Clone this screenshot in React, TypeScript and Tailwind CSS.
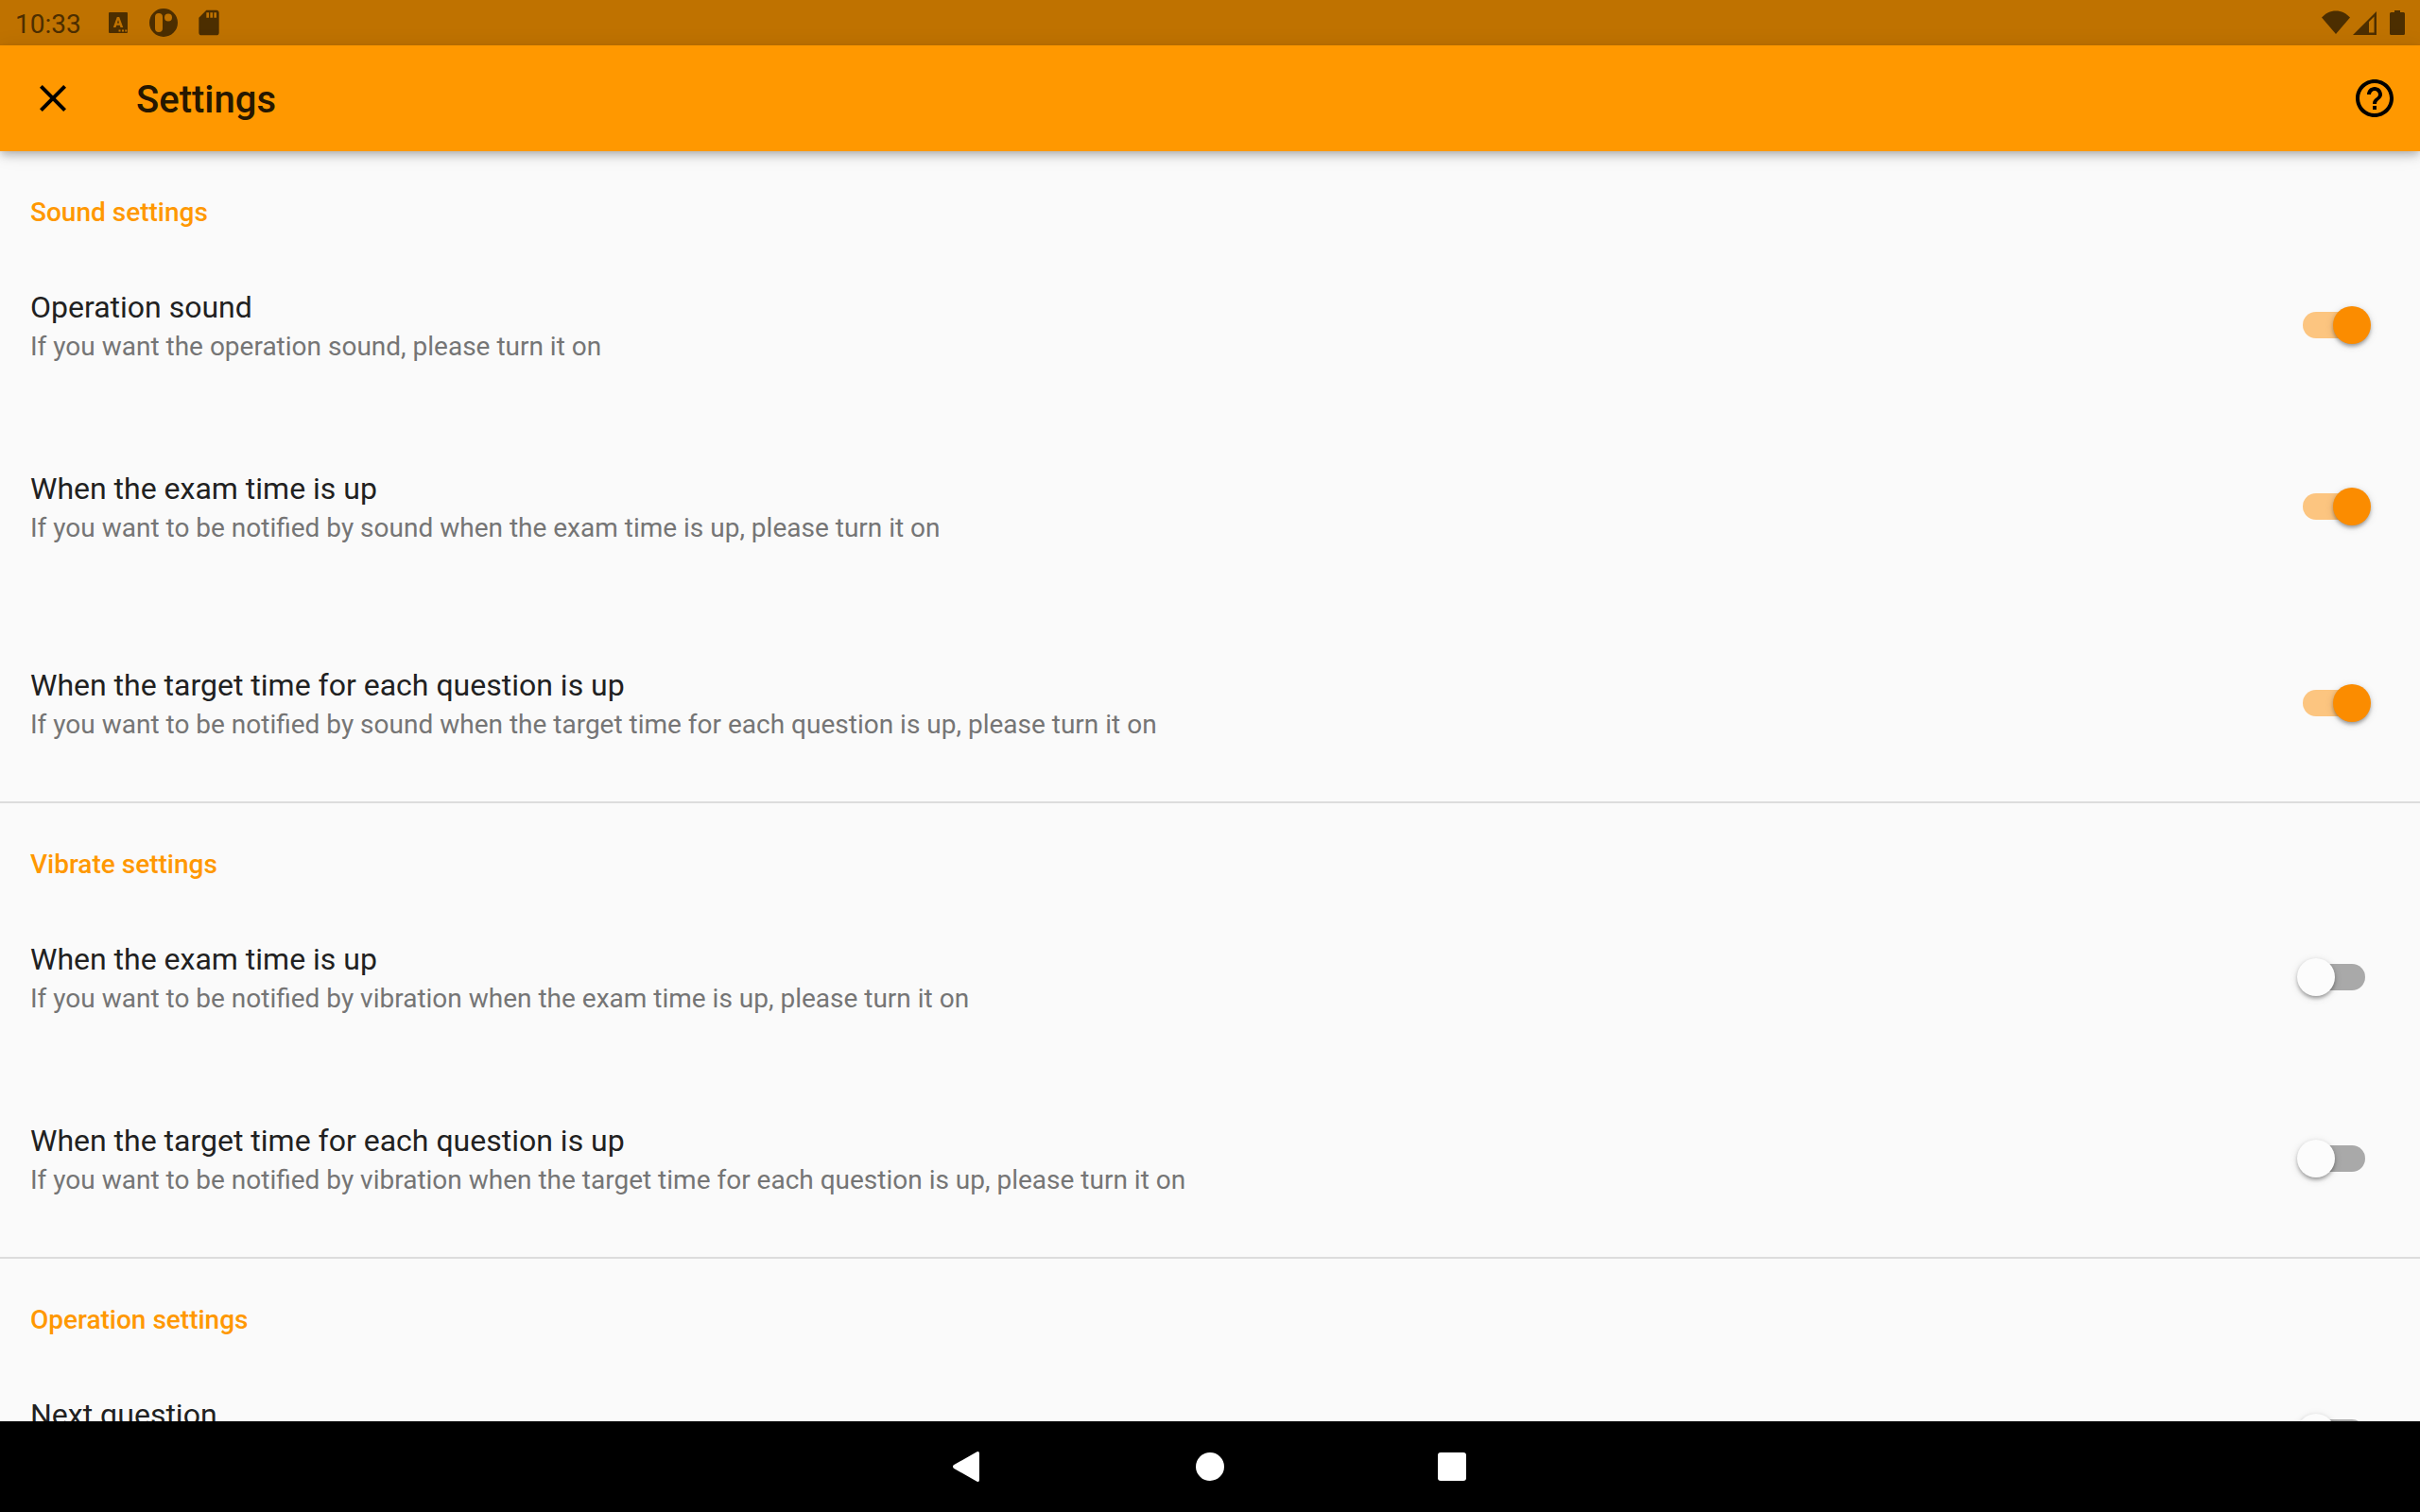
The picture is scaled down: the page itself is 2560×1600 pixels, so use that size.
import { useState } from "react";
import clsx from "clsx";

interface Item {
  title: string;
  subtitle: string;
  on: boolean;
  spaced?: boolean;
}

interface Section {
  heading: string;
  items: Item[];
}

const sections: Section[] = [
  {
    heading: "Sound settings",
    items: [
      { title: "Operation sound", subtitle: "If you want the operation sound, please turn it on", on: true },
      { title: "When the exam time is up", subtitle: "If you want to be notified by sound when the exam time is up, please turn it on", on: true },
      { title: "When the target time for each question is up", subtitle: "If you want to be notified by sound when the target time for each question is up, please turn it on", on: true, spaced: true },
    ],
  },
  {
    heading: "Vibrate settings",
    items: [
      { title: "When the exam time is up", subtitle: "If you want to be notified by vibration when the exam time is up, please turn it on", on: false },
      { title: "When the target time for each question is up", subtitle: "If you want to be notified by vibration when the target time for each question is up, please turn it on", on: false },
    ],
  },
  {
    heading: "Operation settings",
    items: [{ title: "Next question", subtitle: "", on: false }],
  },
];

function StatusBar() {
  return (
    <div className="flex h-12 shrink-0 items-center bg-[#bf7200] pl-4 pr-2 text-[#4c2e00]">
      <span className="pt-1 text-[28px] leading-8">10:33</span>
      <svg className="ml-[27px] h-6 w-6" viewBox="0 0 24 24" fill="currentColor">
        <path fillRule="evenodd" d="M3 1h18a1 1 0 0 1 1 1v20a1 1 0 0 1-1 1H3a1 1 0 0 1-1-1V2a1 1 0 0 1 1-1ZM10.800 6 6.800 17h2.700l.8-2.200h3.400l.8 2.200h2.700L13.200 6ZM12 9l1.100 3.500h-2.200ZM12.500 19.500v2h2v-2ZM16 19.500v2h2v-2ZM19.300 19.500v2h2v-2Z" />
      </svg>
      <svg className="ml-5 h-8 w-8" viewBox="0 0 32 32" fill="currentColor">
        <path fillRule="evenodd" d="M16 1a15 15 0 1 1 0 30a15 15 0 0 1 0-30ZM11 6a4 4 0 0 0-4 4v12a4 4 0 0 0 8 0V10a4 4 0 0 0-4-4ZM21 6.500a4 4 0 1 0 0 8a4 4 0 0 0 0-8Z" />
      </svg>
      <svg className="ml-4 h-8 w-8" viewBox="0 0 24 24" fill="currentColor">
        <path d="M18 2h-8L4.020 8 4 20c0 1.100.9 2 2 2h12c1.100 0 2-.9 2-2V4c0-1.100-.9-2-2-2zm-6 6h-2V4h2v4zm3 0h-2V4h2v4zm3 0h-2V4h2v4z" />
      </svg>
      <svg className="ml-auto h-8 w-8" viewBox="0 0 32 32" fill="currentColor">
        <path d="M15 28 0 10.500C4.500 6 9 3.500 15 3.500S25.500 6 30 10.500Z" />
      </svg>
      <svg className="h-8 w-8" viewBox="0 0 32 32" fill="currentColor">
        <path fillRule="evenodd" d="M26 4v25H1ZM23.500 9.500 18 15V26.500h5.500Z" />
      </svg>
      <svg className="h-8 w-8" viewBox="0 0 32 32" fill="currentColor">
        <path d="M13 3h6v2h3.500a1.500 1.500 0 0 1 1.500 1.500v21a1.500 1.500 0 0 1-1.500 1.500h-13A1.500 1.500 0 0 1 8 27.500v-21A1.500 1.500 0 0 1 9.500 5H13Z" />
      </svg>
    </div>
  );
}

function AppBar() {
  return (
    <header className="relative z-10 flex h-28 shrink-0 items-center bg-[#ff9800] px-8 pr-6 shadow-[0_4px_8px_-2px_rgba(0,0,0,0.18),0_6px_10px_rgba(0,0,0,0.1),0_2px_20px_rgba(0,0,0,0.1)]">
      <button aria-label="Close" className="cursor-pointer text-black">
        <svg className="h-12 w-12" viewBox="0 0 24 24" fill="currentColor">
          <path d="M19 6.410 17.590 5 12 10.590 6.410 5 5 6.410 10.590 12 5 17.590 6.410 19 12 13.410 17.590 19 19 17.590 13.410 12z" />
        </svg>
      </button>
      <h1 className="ml-16 pt-1 text-[40px] font-medium leading-12 text-[#261700]">Settings</h1>
      <button aria-label="Help" className="ml-auto cursor-pointer text-black">
        <svg className="h-12 w-12" viewBox="0 0 24 24" fill="currentColor">
          <path d="M11 18h2v-2h-2v2zm1-16C6.480 2 2 6.480 2 12s4.480 10 10 10 10-4.480 10-10S17.520 2 12 2zm0 18c-4.410 0-8-3.590-8-8s3.590-8 8-8 8 3.590 8 8-3.590 8-8 8zm0-14c-2.210 0-4 1.790-4 4h2c0-1.100.9-2 2-2s2 .9 2 2c0 2-3 1.750-3 5h2c0-2.250 3-2.500 3-5 0-2.210-1.790-4-4-4z" />
        </svg>
      </button>
    </header>
  );
}

function SettingRow({ item }: { item: Item }) {
  const [on, setOn] = useState(item.on);

  return (
    <label
      className={clsx(
        "flex h-28 cursor-pointer items-center justify-between pl-8 pr-[52px]",
        item.spaced && "mt-4",
      )}
    >
      <span className="flex flex-col gap-0.5 pt-1">
        <span className="text-[32px] leading-10 text-[#212121]">{item.title}</span>
        <span className="min-h-10 text-[28px] leading-10 text-[#757575]">{item.subtitle}</span>
      </span>
      <input
        type="checkbox"
        role="switch"
        checked={on}
        onChange={(e) => setOn(e.target.checked)}
        className="relative h-10 w-[78px] shrink-0 cursor-pointer appearance-none before:absolute before:left-1.5 before:top-1.5 before:h-7 before:w-[66px] before:rounded-full before:bg-[#a9a9a9] after:absolute after:left-0 after:top-0 after:size-10 after:rounded-full after:bg-[#fcfcfc] after:shadow-[0_4px_4px_-2px_rgba(0,0,0,0.2),0_2px_4px_rgba(0,0,0,0.2),0_2px_10px_rgba(0,0,0,0.12)] checked:before:bg-[#fcc580] checked:after:left-auto checked:after:right-0 checked:after:bg-[#fb8c00]"
      />
    </label>
  );
}

function NavBar() {
  return (
    <nav className="flex h-24 shrink-0 items-center justify-center bg-black text-white">
      <button aria-label="Back" className="flex h-24 w-64 cursor-pointer items-center justify-center">
        <svg className="h-10 w-10" viewBox="0 0 40 40" fill="currentColor">
          <path d="M4.800 18.300 29.500 4.300Q32 3.500 32 6v28q0 2.500-2.500 1.700L4.800 21.700Q3.200 20 4.800 18.300Z" />
        </svg>
      </button>
      <button aria-label="Home" className="flex h-24 w-64 cursor-pointer items-center justify-center">
        <span className="size-[30px] rounded-full bg-white" />
      </button>
      <button aria-label="Recent apps" className="flex h-24 w-64 cursor-pointer items-center justify-center">
        <span className="size-[30px] rounded-[3px] bg-white" />
      </button>
    </nav>
  );
}

export default function App() {
  return (
    <div className="flex h-screen flex-col overflow-hidden bg-[#fafafa] font-['Roboto',sans-serif]">
      <StatusBar />
      <AppBar />
      <main className="min-h-0 flex-1 overflow-hidden">
        {sections.map((section) => (
          <section key={section.heading} className="border-b-2 border-[#dcdcdc] pb-12">
            <h2 className="flex h-32 items-center px-8 pt-0.5 text-[28px] font-medium leading-10 text-[#ff9800]">
              {section.heading}
            </h2>
            <div className="flex flex-col gap-20">
              {section.items.map((item) => (
                <SettingRow key={item.title} item={item} />
              ))}
            </div>
          </section>
        ))}
      </main>
      <NavBar />
    </div>
  );
}
